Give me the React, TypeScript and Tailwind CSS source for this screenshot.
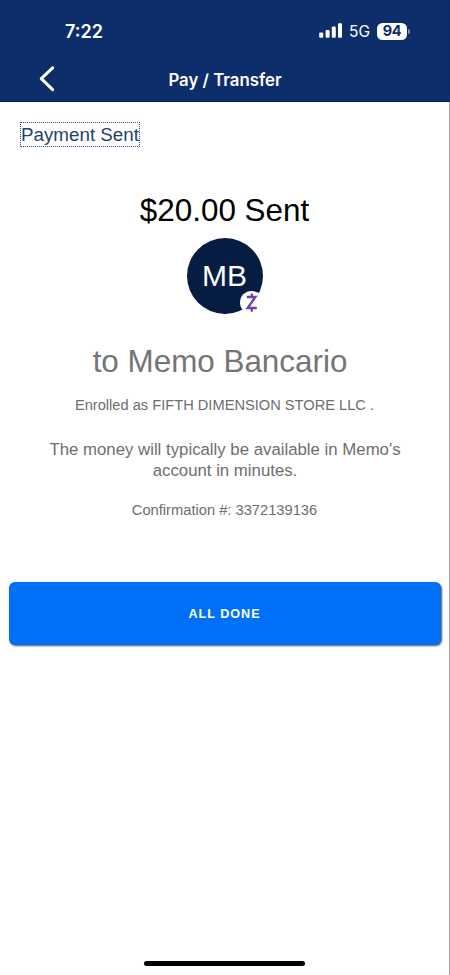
function SignalIcon() {
  return (
    <svg width="24" height="16" viewBox="0 0 24 16" fill="#fff" aria-hidden="true">
      <rect x="0.2" y="9.5" width="4" height="5.3" rx="1.1" />
      <rect x="6.6" y="6.9" width="4" height="7.9" rx="1.1" />
      <rect x="12.8" y="3.6" width="4" height="11.2" rx="1.1" />
      <rect x="19" y="0.3" width="4" height="14.5" rx="1.1" />
    </svg>
  );
}

function Battery() {
  return (
    <div className="flex items-center">
      <div className="flex h-[17px] w-[30px] items-center justify-center rounded-[5.5px] bg-white font-['Inter',sans-serif] text-[14.5px] font-bold leading-none tracking-[-0.3px] text-[#0e2d6b]">
        94
      </div>
      <div className="ml-px h-[5px] w-[2px] rounded-r-full bg-[#7f91b8]" />
    </div>
  );
}

function ZelleBadge() {
  return (
    <span className="absolute right-0 bottom-0 flex h-[23px] w-[23px] items-center justify-center rounded-full bg-white">
      <svg width="23" height="23" viewBox="0 0 23 23" fill="none" stroke="#6c45a5" strokeWidth="2.3" aria-hidden="true">
        <path d="M6.8 6h8.6L7.6 17h9.2M11.8 2.4V6M11.8 17v3.8" />
      </svg>
    </span>
  );
}

export default function App() {
  return (
    <div className="flex h-[975px] w-[450px] flex-col overflow-hidden bg-white font-['Liberation_Sans',Arial,sans-serif] text-[#6e6e6e]">
      <header className="flex h-[102px] shrink-0 flex-col border-b border-[#071d50] bg-[#0e2d6b] text-white">
        <div className="flex h-[56px] items-center justify-between pt-[6px] pr-[40px] pl-[65px]">
          <span className="font-['Inter',sans-serif] text-[18px] font-semibold">7:22</span>
          <div className="flex items-center">
            <SignalIcon />
            <span className="mr-[7px] ml-[6px] pt-px font-['Inter',sans-serif] text-[15.5px]">5G</span>
            <Battery />
          </div>
        </div>
        <div className="grid h-[45px] grid-cols-[1fr_auto_1fr] items-center">
          <button aria-label="Back" className="ml-[38px] w-[17px]">
            <svg width="17" height="26" viewBox="0 0 17 26" fill="none" stroke="#fff" strokeWidth="3" strokeLinecap="round" strokeLinejoin="round">
              <path d="M14.6 1.8 3.3 12.6l11.3 11" />
            </svg>
          </button>
          <h1 className="pt-[4px] font-['Inter',sans-serif] text-[16.8px] font-semibold">Pay / Transfer</h1>
        </div>
      </header>

      <main className="flex grow flex-col items-center border-r border-[#a3a3a3] text-center">
        <h2 className="mt-[20px] ml-[20px] flex h-[25px] w-[120px] items-center justify-center self-start border border-dotted border-[#24508c] pt-px text-[18.8px] whitespace-nowrap text-[#27406f]">
          Payment Sent
        </h2>

        <p className="mt-[44px] text-[31.4px] leading-[40px] text-black">$20.00 Sent</p>
        <div className="relative mt-[7px] flex h-[76px] w-[76px] items-center justify-center rounded-full bg-[#061c42] pb-[2px] text-[30px] text-white">
          MB
          <ZelleBadge />
        </div>
        <p className="mt-[28px] pr-[9px] text-[31.4px] leading-[40px] text-[#757575]">to Memo Bancario</p>
        <p className="mt-[13px] text-[14.65px] leading-[20px]">Enrolled as FIFTH DIMENSION STORE LLC .</p>
        <p className="mt-[24px] pl-px text-[16.8px] leading-[21px]">
          The money will typically be available in Memo's
          <br />
          account in minutes.
        </p>
        <p className="mt-[19px] text-[14.7px] leading-[20px]">Confirmation #: 3372139136</p>

        <button className="mt-[62px] h-[63px] w-[432px] rounded-[6px] bg-[#0070f8] pt-[2px] text-[12.6px] font-bold tracking-[1px] text-white shadow-[1px_1px_2px_#555]">
          ALL DONE
        </button>

        <div className="mt-auto mb-[9px] h-[5px] w-[161px] rounded-full bg-black" />
      </main>
    </div>
  );
}
